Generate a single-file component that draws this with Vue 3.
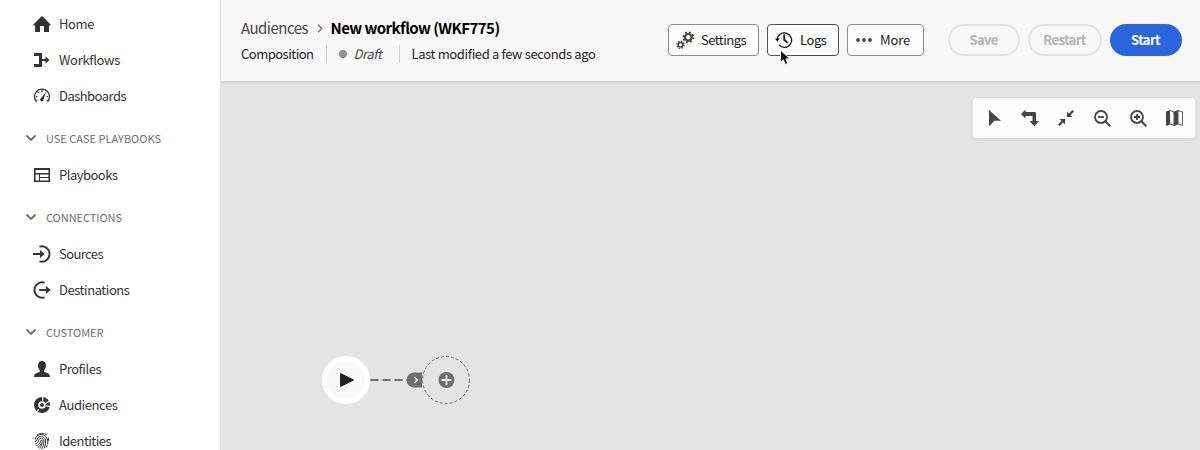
<script setup>
const groups = [
  { items: [{ label: 'Home', icon: 'home', w: 35 }, { label: 'Workflows', icon: 'flow', w: 61 }, { label: 'Dashboards', icon: 'gauge', w: 67 }] },
  { title: 'USE CASE PLAYBOOKS', w: 115, items: [{ label: 'Playbooks', icon: 'book', w: 58.5 }] },
  { title: 'CONNECTIONS', w: 76, items: [{ label: 'Sources', icon: 'source', w: 44 }, { label: 'Destinations', icon: 'dest', w: 70.5 }] },
  { title: 'CUSTOMER', w: 57.5, items: [{ label: 'Profiles', icon: 'user', w: 42 }, { label: 'Audiences', icon: 'audience', w: 58.5 }, { label: 'Identities', icon: 'finger', w: 52 }] },
]

// Spreads the letters of a label so that it fills the given width.
const vFit = {
  mounted(el, { value }) {
    const width = el.getBoundingClientRect().width
    el.style.letterSpacing = (value - width) / el.textContent.length + 'px'
  },
}
</script>

<template>
  <div class="app">
    <nav class="side">
      <section v-for="(g, i) in groups" :key="i">
        <div v-if="g.title" class="group">
          <svg width="10" height="6" viewBox="0 0 10 6"><path d="M1 1l4 4 4-4" fill="none" stroke="#6e6e6e" stroke-width="1.8" stroke-linecap="round" /></svg>
          <span v-fit="g.w">{{ g.title }}</span>
        </div>
        <a v-for="it in g.items" :key="it.label" class="item">
          <svg width="18" height="18" viewBox="0 0 18 18" fill="#323232">
            <path v-if="it.icon === 'home'" d="M9 1.3a.8.8 0 0 1 .6.2l8 8c.4.4.1.9-.4.9H16v6a.6.6 0 0 1-.6.6H11v-5.500a.5.500 0 0 0-.5-.5h-3a.5.500 0 0 0-.5.5V17H2.700a.6.6 0 0 1-.6-.6v-6H.8c-.5 0-.8-.5-.4-.9l8-8A.8.8 0 0 1 9 1.300z" />
            <path v-else-if="it.icon === 'flow'" d="M1 2h7.500a.5.500 0 0 1 .5.500V8h3.500V5.600L16.500 9l-4 3.400V10H9v5.500a.5.500 0 0 1-.5.500H1v-3h5V5H1z" />
            <g v-else-if="it.icon === 'gauge'">
              <path d="M3.500 14.800A7.500 7.500 0 1 1 14.500 14.800" fill="none" stroke="#323232" stroke-width="1.300" />
              <path d="M9 3v2M4.600 5.200l1 1M3 9.500h1.500M13.700 9.500H15M3.500 13.500l1-.5M14.500 13.500l-1-.5" stroke="#323232" stroke-width="1.200" />
              <path d="M13.200 4.800l-2.700 7.600a1.700 1.700 0 1 1-2.600-1.200z" />
            </g>
            <path v-else-if="it.icon === 'book'" fill-rule="evenodd" d="M1 2h16v14H1zM2.500 4v3h13V4zM2.500 8.500v6H6v-6zM7 8.500V11h8.500V8.500zM7 12v2.500h8.500V12z" />
            <g v-else-if="it.icon === 'source'">
              <path d="M6.400 1.700A7.700 7.700 0 1 1 6.400 16.300" fill="none" stroke="#323232" stroke-width="1.800" />
              <path d="M.7 8H7V5l4.700 4L7 13v-3H.7a1 1 0 0 1 0-2z" />
            </g>
            <g v-else-if="it.icon === 'dest'">
              <path d="M11.600 1.700A7.700 7.700 0 1 0 11.600 16.300" fill="none" stroke="#323232" stroke-width="1.800" />
              <path d="M7 8h6V5l4.700 4L13 13v-3H7a1 1 0 0 1 0-2z" />
            </g>
            <path v-else-if="it.icon === 'user'" d="M9 1c2.500 0 4 1.900 4 4.500 0 2-.8 3.700-1.800 4.800v.9c0 .6.300.8.800 1 3 .9 5 1.800 5 4.800H1c0-3 2-3.900 5-4.800.5-.2.800-.4.800-1v-.9C5.800 9.200 5 7.500 5 5.500 5 2.900 6.500 1 9 1z" />
            <g v-else-if="it.icon === 'audience'">
              <circle cx="9" cy="9" r="5.900" fill="none" stroke="#323232" stroke-width="4.200" />
              <circle cx="9" cy="9" r="1.900" />
              <path d="M9.700 5V.5M12.400 7.500l4.400-2.600M13 9.800l4.300.5M5.800 13l-1.500 2.500" stroke="#fff" stroke-width="1.200" />
            </g>
            <g v-else fill="none" stroke="#323232" stroke-width="1" stroke-linecap="round">
              <path d="M4.500 2.700C7 .8 11.200.8 13.500 2.800M2.300 7C3.200 1.700 10.200 1.400 13 4.700c1.800 2.100 2 4.300 1.700 7.300M2.100 9.800C5 9 3.400 5.600 6.200 4.700c3.200-1.200 6.300 1.200 6.400 4.300.1 2.900-.4 5.300-1.500 7M2.600 12c3.700-1.200 2.400-4.700 4.500-5.600 2.200-.8 3.800.7 3.800 2.800 0 3.100-.7 5.400-2.100 7.500M3.600 13.700c3.800-1.500 3.500-4.200 4.200-5.200.6-.6 1.400-.2 1.400.8 0 3-.9 5-2.500 6.800M5 15.300c1.500-.9 2.300-2 2.800-3.300M13.200 15.200l.8-2M15.600 6v2.500" />
            </g>
          </svg>
          <span v-fit="it.w">{{ it.label }}</span>
        </a>
      </section>
    </nav>

    <main class="main">
      <header class="head">
        <div class="titles">
          <div class="crumbs">
            <span v-fit="67" class="crumb">Audiences</span>
            <svg width="6" height="9" viewBox="0 0 6 9"><path d="M1 .8l3.700 3.700L1 8.200" fill="none" stroke="#777" stroke-width="1.400" /></svg>
            <b v-fit="169">New workflow (WKF775)</b>
          </div>
          <div class="meta">
            <span v-fit="72.500">Composition</span>
            <i class="rule first"></i>
            <span class="dot"></span>
            <em v-fit="28">Draft</em>
            <i class="rule second"></i>
            <span v-fit="184">Last modified a few seconds ago</span>
          </div>
        </div>

        <div class="actions">
          <button class="tool settings">
            <svg width="19" height="18" viewBox="0 0 19 18" fill="none" stroke="#464646">
              <circle cx="12.300" cy="6.300" r="3.300" stroke-width="2.200" />
              <circle cx="12.300" cy="6.300" r="5" stroke-width="1.800" stroke-dasharray="1.963 1.963" />
              <circle cx="4.500" cy="13.800" r="2.300" stroke-width="1.500" />
              <circle cx="4.500" cy="13.800" r="3.600" stroke-width="1.400" stroke-dasharray="1.414 1.414" />
            </svg>
            <span v-fit="45">Settings</span>
          </button>
          <button class="tool logs">
            <svg width="18" height="18" viewBox="0 0 18 18">
              <path d="M2.200 8.500A7.200 7.200 0 1 1 4 13.900" fill="none" stroke="#111" stroke-width="1.300" />
              <path d="M0 7.500h4.800L2.400 10.700zM8.300 3.500h1.500l.5 5 2.900 2.800-1 1.100-3.900-3.200z" fill="#111" />
            </svg>
            <span v-fit="26.500">Logs</span>
            <svg class="pointer" width="13" height="18" viewBox="0 0 13 18"><path d="M1.500 1v12.300l2.800-2.500 2 4.700 2.600-1.100-2-4.500h4z" fill="#111" stroke="#fff" stroke-width="1" /></svg>
          </button>
          <button class="tool more">
            <svg width="18" height="18" viewBox="0 0 18 18" fill="#464646"><circle cx="3" cy="9" r="1.900" /><circle cx="9" cy="9" r="1.900" /><circle cx="15" cy="9" r="1.900" /></svg>
            <span v-fit="30">More</span>
          </button>
          <button class="pill save"><span v-fit="28">Save</span></button>
          <button class="pill restart"><span v-fit="42.500">Restart</span></button>
          <button class="pill start"><span v-fit="29">Start</span></button>
        </div>
      </header>

      <div class="canvas">
        <div class="toolbar">
          <svg width="18" height="18" viewBox="0 0 18 18"><path d="M4 1l12 10.700H9.500L4 17.200z" /></svg>
          <svg width="18" height="18" viewBox="0 0 18 18"><path d="M0 5l4.500-4.500V3H14a1 1 0 0 1 1 1v8h3l-4.600 5.500L8.500 12h3V7h-7v2.500z" /></svg>
          <svg width="18" height="18" viewBox="0 0 18 18"><path d="M9.900 2.500V8h5.600l-1.900-1.900 3.400-3.500-1.500-1.500-3.600 3.400zM8.100 15.500V10H2.500l1.900 1.900L1 15.400l1.500 1.500 3.600-3.400z" /></svg>
          <svg width="18" height="18" viewBox="0 0 18 18"><g fill="none" stroke="#464646"><circle cx="8" cy="8" r="6" stroke-width="1.800" /><path d="M12.300 12.300l4.500 4.500" stroke-width="2" stroke-linecap="round" /><path d="M5 8h6" stroke-width="1.800" /></g></svg>
          <svg width="18" height="18" viewBox="0 0 18 18"><g fill="none" stroke="#464646"><circle cx="8" cy="8" r="6" stroke-width="1.800" /><path d="M12.300 12.300l4.500 4.500" stroke-width="2" stroke-linecap="round" /><path d="M5 8h6M8 5v6" stroke-width="1.800" /></g></svg>
          <svg width="18" height="18" viewBox="0 0 18 18"><path d="M1 2.500L5 1v14.500L1 17zM9 2.500L13 1v14.500L9 17z" /><path d="M5 1.500l4 1.500v13.500l-4-1.500M13 1.500l4.500 1.500v13.500l-4.500-1.500z" fill="none" stroke="#464646" stroke-width=".9" /></svg>
        </div>

        <svg class="diagram" width="160" height="60" viewBox="0 0 160 60">
          <circle cx="31" cy="30" r="24" fill="#fff" />
          <circle cx="31" cy="30" r="19" fill="#f8f8f8" />
          <path d="M25.500 23.500l13 6.500-13 6.500z" fill="#222" stroke="#222" stroke-width="1" stroke-linejoin="round" />
          <path d="M55.500 30H92" stroke="#6e6e6e" stroke-width="2" stroke-dasharray="8 4" />
          <circle cx="131" cy="30" r="23.500" fill="none" stroke="#6e6e6e" stroke-dasharray="3 2" />
          <path d="M107 22.500v15H99a7.500 7.500 0 0 1 0-15z" fill="#6e6e6e" />
          <path d="M99.300 27l3 3-3 3" fill="none" stroke="#fff" stroke-width="1.500" />
          <circle cx="131.500" cy="30" r="8" fill="#6e6e6e" />
          <path d="M126.500 30h10M131.500 25v10" stroke="#eee" stroke-width="1.800" />
        </svg>
      </div>
    </main>
  </div>
</template>

<style>
body { margin: 0; overflow: hidden; }
</style>

<style scoped>
.app {
  display: flex;
  width: 1200px;
  height: 450px;
  overflow: hidden;
  background: #fff;
  color: #464646;
  font-family: "Noto Sans CJK JP", "Noto Sans", sans-serif;
  font-size: 13px;
  line-height: 18px;
}
span, b, em { white-space: nowrap; }
svg { display: block; flex: none; }
.side { width: 220px; flex: none; padding-top: 6px; box-sizing: border-box; color: #333; }
.item { display: flex; align-items: center; gap: 8px; height: 36px; padding-left: 33px; }
.group { display: flex; align-items: center; gap: 10px; height: 43px; padding: 4px 0 0 26px; box-sizing: border-box; color: #6e6e6e; font-size: 11px; }
.main { flex: 1; min-width: 0; display: flex; flex-direction: column; }
.head { display: flex; justify-content: space-between; height: 83px; box-sizing: border-box; padding: 17px 18px 0 20px; background: #f8f8f8; border-left: 1px solid #e4e4e4; border-bottom: 2px solid #d3d4d4; }
.crumbs { display: flex; align-items: center; height: 22px; font-size: 15px; }
.crumbs svg { margin: 1px 8px 0 9px; }
.crumbs b { color: #000; margin-left: -.5px; }
.meta { display: flex; align-items: center; height: 20px; margin-top: 5px; color: #222; }
.meta em { color: #464646; }
.rule { width: 1px; height: 18px; background: #cfcfcf; }
.rule.first { margin: 0 12px; }
.rule.second { margin: 0 12px 0 17px; }
.dot { width: 8px; height: 8px; margin-right: 7px; border-radius: 50%; background: #909090; }
.actions { display: flex; padding-top: 7px; }
button { display: flex; align-items: center; height: 32px; box-sizing: border-box; padding: 0; font: inherit; }
.tool { position: relative; gap: 7px; margin-right: 8px; border: 1px solid #8c8c8c; border-radius: 4px; background: #fdfdfd; color: #222; padding-left: 7px; }
.settings { width: 91px; gap: 6px; }
.logs { width: 72px; border-color: #505050; color: #111; }
.more { width: 77px; margin-right: 24px; }
.pointer { position: absolute; left: 11px; top: 24px; }
.pill { justify-content: center; border: 2px solid #e4e4e4; border-radius: 16px; background: #f8f8f8; color: #b3b3b3; font-weight: 700; }
.pill span { margin-left: -1px; }
.save { width: 72px; margin-right: 8px; }
.restart { width: 74px; margin-right: 8px; }
.start { width: 72px; border-color: #2b66de; background: #2b66de; color: #fff; }
.canvas { position: relative; flex: 1; background: #e4e4e4; }
.toolbar { display: flex; align-items: center; justify-content: flex-end; gap: 18px; width: 222px; height: 40px; box-sizing: border-box; padding-right: 12px; margin: 15px 5px 0 auto; border-radius: 4px; background: #fdfdfd; box-shadow: 0 1px 4px rgba(0, 0, 0, .07); fill: #464646; }
.diagram { position: absolute; left: 95px; top: 267px; }
</style>
